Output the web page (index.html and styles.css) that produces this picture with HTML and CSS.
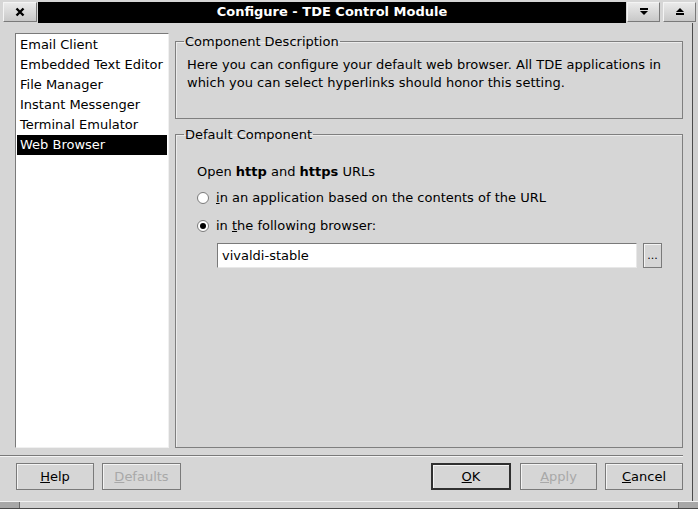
FILE: index.html
```html
<!DOCTYPE html>
<html>
<head>
<meta charset="utf-8">
<link rel="stylesheet" href="styles.css">
</head>
<body>
<div class="window">
  <div class="titlebar">
    <button class="tbtn close" aria-label="Close">
      <svg width="10" height="10" viewBox="0 0 10 10"><path d="M1.5 1.5 L8.5 8.5 M8.5 1.5 L1.5 8.5" stroke="#000" stroke-width="2.4" fill="none"/></svg>
    </button>
    <div class="title">Configure - TDE Control Module</div>
    <button class="tbtn" aria-label="Minimize">
      <svg width="10" height="8" viewBox="0 0 10 8"><rect x="1" y="0" width="8" height="2" fill="#000"/><path d="M1 3 L9 3 L5 7 Z" fill="#000"/></svg>
    </button>
    <button class="tbtn" aria-label="Maximize">
      <svg width="10" height="8" viewBox="0 0 10 8"><path d="M5 0 L9 4 L1 4 Z" fill="#000"/><rect x="1" y="5" width="8" height="2" fill="#000"/></svg>
    </button>
  </div>
  <div class="body">
    <div class="client">
      <div class="main">
        <ul class="list">
          <li>Email Client</li>
          <li>Embedded Text Editor</li>
          <li>File Manager</li>
          <li>Instant Messenger</li>
          <li>Terminal Emulator</li>
          <li class="sel">Web Browser</li>
        </ul>
        <div class="right">
          <fieldset class="group g1">
            <legend>Component Description</legend>
            <p class="desc">Here you can configure your default web browser. All TDE applications in which you can select hyperlinks should honor this setting.</p>
          </fieldset>
          <fieldset class="group g2">
            <legend>Default Component</legend>
            <div class="g2body">
              <div class="open">Open <b>http</b> and <b>https</b> URLs</div>
              <label class="radio r1"><span class="dot"></span><span><u>i</u>n an application based on the contents of the URL</span></label>
              <label class="radio r2"><span class="dot on"></span><span>in <u>t</u>he following browser:</span></label>
              <div class="browse">
                <div class="input">vivaldi-stable</div>
                <button class="dots">...</button>
              </div>
            </div>
          </fieldset>
        </div>
      </div>
      <div class="sep"></div>
      <div class="buttons">
        <button class="btn help"><u>H</u>elp</button>
        <button class="btn defaults dis"><u>D</u>efaults</button>
        <span class="spacer"></span>
        <button class="btn ok"><u>O</u>K</button>
        <button class="btn apply dis"><u>A</u>pply</button>
        <button class="btn cancel"><u>C</u>ancel</button>
      </div>
    </div>
    <div class="rframe"></div>
  </div>
  <div class="bframe"><span class="grip"></span><span class="bmid"></span><span class="grip"></span></div>
</div>
</body>
</html>
```
FILE: styles.css
```css
* { box-sizing: border-box; }
html, body { margin: 0; padding: 0; }
body {
  width: 698px;
  height: 509px;
  background: #d6d6d6;
  font-family: "DejaVu Sans", sans-serif;
  font-size: 13px;
  color: #000;
  overflow: hidden;
}
.window {
  width: 698px;
  height: 509px;
  display: flex;
  flex-direction: column;
  background: #d6d6d6;
}
.titlebar {
  height: 23px;
  padding: 2px 2px 0 3px;
  display: flex;
  align-items: stretch;
  background: #d6d6d6;
}
.title {
  flex: 1;
  background: #000;
  color: #fff;
  font-weight: bold;
  text-align: center;
  line-height: 20px;
  height: 21px;
  margin: 0 1px;
}
.tbtn {
  width: 33px;
  height: 20px;
  margin: 0;
  padding: 0;
  border: 1px solid #8a8a8a;
  border-color: #f4f4f4 #7a7a7a #7a7a7a #f4f4f4;
  background: linear-gradient(#eaeaea, #c8c8c8);
  display: flex;
  align-items: center;
  justify-content: center;
}
.tbtn + .tbtn { margin-left: 3px; }
.close { width: 34px; }
.body {
  flex: 1;
  display: flex;
}
.client {
  flex: 1;
  display: flex;
  flex-direction: column;
  padding: 10px 9px 0 15px;
}
.rframe {
  width: 6px;
  border-left: 1px solid #4a4a4a;
  background: #d0d0d0;
}
.main {
  display: flex;
  gap: 6px;
  height: 415px;
}
.list {
  list-style: none;
  margin: 0;
  padding: 1px;
  width: 154px;
  height: 415px;
  background: #fff;
  border: 1px solid #8a8a8a;
  border-color: #7a7a7a #f0f0f0 #f0f0f0 #7a7a7a;
}
.list li {
  height: 20px;
  line-height: 20px;
  padding-left: 3px;
  white-space: nowrap;
}
.list li.sel { background: #000; color: #fff; }
.right {
  flex: 1;
  display: flex;
  flex-direction: column;
  gap: 8px;
  padding-top: 1px;
}
.group {
  margin: 0;
  border: 1px solid #7f7f7f;
  box-shadow: inset 1px 1px 0 #ececec;
  padding: 0 11px;
  min-width: 0;
}
.group legend {
  padding: 0 1px;
  margin-left: -3px;
  line-height: 15px;
}
.g1 { height: 85px; }
.desc {
  margin: 7px 0 0 0;
  line-height: 18px;
}
.g2 { flex: 1; }
.g2body { padding-left: 10px; }
.open {
  margin-top: 22px;
  line-height: 16px;
}
.radio {
  display: flex;
  align-items: center;
  gap: 7px;
  line-height: 16px;
  margin-left: 0;
}
.r1 { margin-top: 10px; }
.r2 { margin-top: 12px; }
.dot {
  width: 12px;
  height: 12px;
  border-radius: 50%;
  border: 1px solid #7a7a7a;
  background: #fff;
  display: flex;
  align-items: center;
  justify-content: center;
}
.dot.on::after {
  content: "";
  width: 6px;
  height: 6px;
  border-radius: 50%;
  background: #000;
}
.browse {
  display: flex;
  gap: 6px;
  margin-top: 9px;
  margin-left: 20px;
}
.input {
  width: 420px;
  height: 25px;
  background: #fff;
  border: 1px solid #7a7a7a;
  border-color: #7a7a7a #e8e8e8 #e8e8e8 #7a7a7a;
  line-height: 23px;
  padding-left: 4px;
}
.dots {
  width: 19px;
  height: 25px;
  padding: 0;
  font-family: inherit;
  font-size: 11px;
  border: 1px solid #7a7a7a;
  background: #d6d6d6;
  box-shadow: inset 1px 1px 0 #f4f4f4;
  line-height: 14px;
}
.sep {
  margin-top: 7px;
  height: 2px;
  border-top: 1px solid #7a7a7a;
  border-bottom: 1px solid #f4f4f4;
  margin-left: -15px;
}
.buttons {
  display: flex;
  margin-top: 6px;
  padding-left: 1px;
  height: 27px;
}
.spacer { flex: 1; }
.btn {
  height: 27px;
  margin: 0;
  padding: 0;
  font-family: inherit;
  font-size: 13px;
  color: #000;
  background: #d6d6d6;
  border: 1px solid #7a7a7a;
  box-shadow: inset 1px 1px 0 #f4f4f4;
}
.help { width: 78px; }
.defaults { width: 79px; margin-left: 8px; }
.ok { width: 80px; border: 2px solid #303030; box-shadow: inset 1px 1px 0 #f4f4f4; }
.apply { width: 77px; margin-left: 9px; }
.cancel { width: 78px; margin-left: 8px; }
.btn.dis { color: #a8a8a8; }
.bframe {
  height: 8px;
  display: flex;
  border-top: 1px solid #f2f2f2;
  border-bottom: 1px solid #4a4a4a;
}
.grip {
  width: 20px;
  background: #a8a8a8;
  border-right: 1px solid #6a6a6a;
}
.grip:last-child { border-right: 0; border-left: 1px solid #6a6a6a; }
.bmid { flex: 1; background: #d0d0d0; }
```
